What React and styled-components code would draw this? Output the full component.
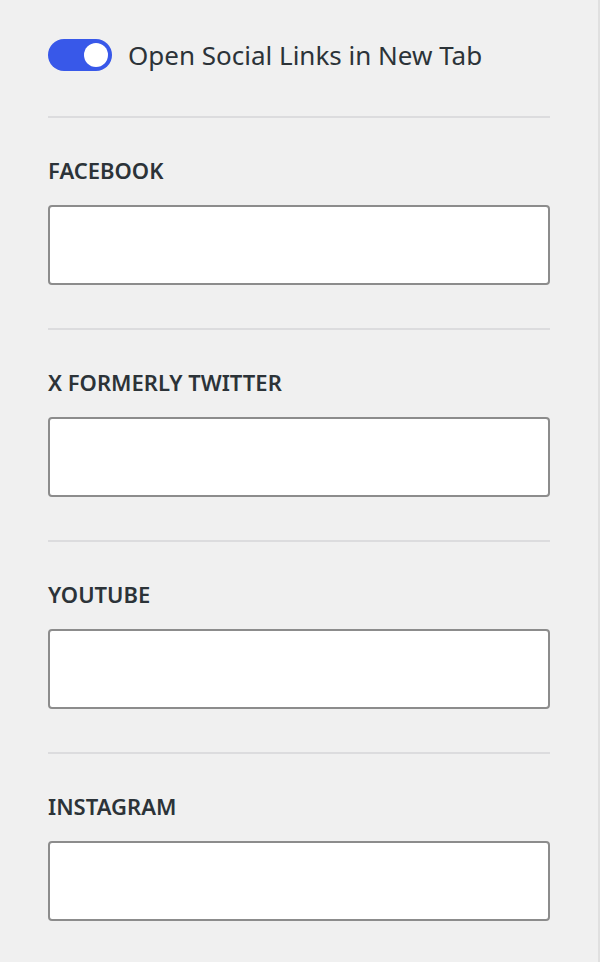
import React, { useState } from 'react';
import styled, { createGlobalStyle } from 'styled-components';

const GlobalStyle = createGlobalStyle`
  html, body {
    margin: 0;
    padding: 0;
    background: #f0f0f0;
  }
  * { box-sizing: border-box; }
`;

const Panel = styled.div`
  width: 600px;
  min-height: 962px;
  background: #f0f0f0;
  border-right: 2px solid #e0e0e0;
  padding: 39px 48px 0 48px;
  font-family: "Noto Sans", "Open Sans", sans-serif;
  color: #2c3338;
`;

const ToggleRow = styled.label`
  display: flex;
  align-items: center;
  gap: 16px;
  height: 32px;
  margin-bottom: 45px;
  cursor: pointer;
`;

const Track = styled.span`
  position: relative;
  flex: none;
  width: 64px;
  height: 32px;
  border-radius: 16px;
  background: ${p => (p.on ? '#3858e9' : '#8c8c8c')};
  transition: background 0.15s;
`;

const Knob = styled.span`
  position: absolute;
  top: 4px;
  left: ${p => (p.on ? '36px' : '4px')};
  width: 24px;
  height: 24px;
  border-radius: 50%;
  background: #fff;
  transition: left 0.15s;
`;

const ToggleText = styled.span`
  font-size: 26px;
  line-height: 32px;
  color: #2c3338;
`;

const Divider = styled.hr`
  margin: 0;
  border: 0;
  height: 2px;
  background: #dcdcde;
`;

const Section = styled.div`
  padding-top: 37px;
  padding-bottom: 43px;
`;

const FieldLabel = styled.label`
  display: block;
  font-size: 22px;
  line-height: 30px;
  font-weight: 600;
  text-transform: uppercase;
  color: #2c3338;
  margin-bottom: 20px;
`;

const TextInput = styled.input`
  display: block;
  width: 100%;
  height: 80px;
  border: 2px solid #8c8c8c;
  border-radius: 4px;
  background: #fff;
  padding: 0 16px;
  font-family: inherit;
  font-size: 26px;
  outline: none;
`;

const fields = ['Facebook', 'X formerly Twitter', 'YouTube', 'Instagram'];

export default function App() {
  const [newTab, setNewTab] = useState(true);
  const [values, setValues] = useState({});

  return (
    <>
      <GlobalStyle />
      <Panel>
        <ToggleRow onClick={() => setNewTab(!newTab)}>
          <Track on={newTab ? 1 : 0}>
            <Knob on={newTab ? 1 : 0} />
          </Track>
          <ToggleText>Open Social Links in New Tab</ToggleText>
        </ToggleRow>
        {fields.map(name => (
          <React.Fragment key={name}>
            <Divider />
            <Section>
              <FieldLabel htmlFor={name}>{name}</FieldLabel>
              <TextInput
                id={name}
                type="text"
                value={values[name] || ''}
                onChange={e => setValues({ ...values, [name]: e.target.value })}
              />
            </Section>
          </React.Fragment>
        ))}
      </Panel>
    </>
  );
}
